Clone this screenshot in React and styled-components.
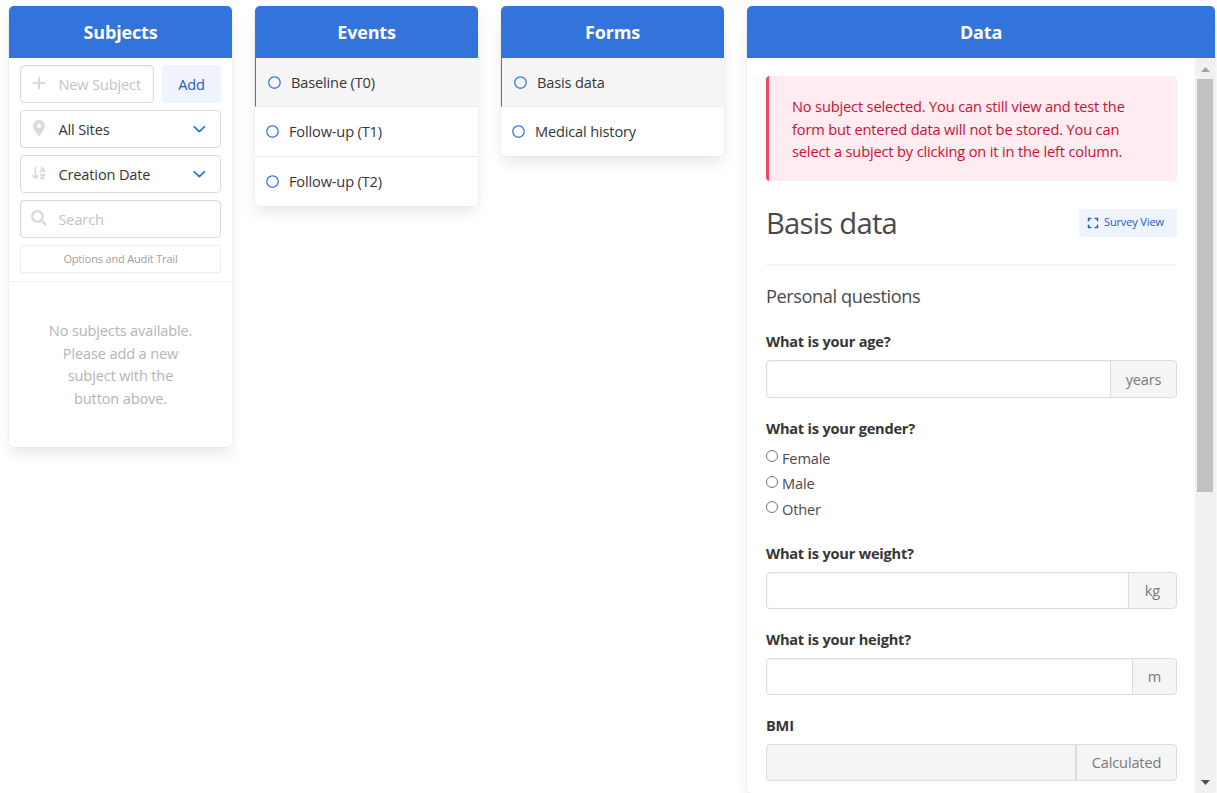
import React from "react";
import styled, { createGlobalStyle, css } from "styled-components";
import { FaPlus, FaExpand, FaLocationDot, FaArrowDownAZ } from "react-icons/fa6";
import { FaSearch, FaRegCircle } from "react-icons/fa";

const GlobalStyle = createGlobalStyle`
  *, *::before, *::after { box-sizing: border-box; }
  html, body { margin: 0; overflow: hidden; background: #fff; }
  body {
    font-family: "Open Sans", "Noto Sans", sans-serif;
    font-size: 14.6px;
    line-height: 22.5px;
    letter-spacing: -0.16px;
    color: #4a4a4a;
  }
  input, button { font: inherit; letter-spacing: inherit; }
`;

const Page = styled.main`
  display: grid;
  grid-template-columns: 223px 223px 223px 468px;
  gap: 23px;
  align-items: start;
  height: 793px;
  padding: 6px 2px 0 9px;
`;

const Panel = styled.section`
  border-radius: 5px;
  background: #fff;
  box-shadow: 0 7.5px 15px -2px rgba(10, 10, 10, 0.1), 0 0 0 1px rgba(10, 10, 10, 0.02);
  ${(p) => p.$tall && css`
    display: flex;
    flex-direction: column;
    height: 787px;
  `}
`;

const PanelHeading = styled.h2`
  display: flex;
  flex: none;
  align-items: center;
  justify-content: center;
  height: 52px;
  margin: 0;
  padding-top: 1px;
  border-radius: 5px 5px 0 0;
  background: #3273dc;
  color: #fff;
  font-size: 18px;
  font-weight: 700;
  letter-spacing: -0.17px;
`;

const Filters = styled.div`
  display: flex;
  flex-direction: column;
  gap: 7px;
  padding: 7px 11px 8px;
  border-bottom: 1px solid #ededed;
`;

const AddRow = styled.div`
  display: flex;
  gap: 8px;
`;

const Control = styled.div`
  display: flex;
  flex: 1;
  align-items: center;
  min-width: 0;
  height: 38px;
  padding-right: ${(p) => (p.$input ? 8 : 14)}px;
  border: 1px solid #dbdbdb;
  border-radius: 4px;
  color: #363636;
  box-shadow: ${(p) => (p.$input ? "inset 0 1px 2px rgba(10, 10, 10, 0.05)" : "none")};
`;

const FilterStack = styled.div`
  display: grid;
  grid-auto-rows: 38px;
  gap: 7px;
`;

const ControlIcon = styled.span`
  display: flex;
  flex: none;
  justify-content: center;
  width: 37.5px;
  padding: 0 1px 2px 0;
  color: #dbdbdb;
  font-size: 16px;
`;

const ControlInput = styled.input`
  flex: 1;
  min-width: 0;
  padding: 0;
  border: 0;
  outline: 0;
  background: none;
  color: #363636;
  &::placeholder { color: #c3c3c3; opacity: 1; }
`;

const ControlText = styled.span`
  flex: 1;
`;

const AddButton = styled.button`
  width: 59px;
  height: 38px;
  padding: 0;
  border: 0;
  border-radius: 4px;
  background: #eef3fc;
  color: #2160c4;
`;

const OptionsButton = styled.button`
  height: 28px;
  padding: 0;
  border: 1px solid #ededed;
  border-radius: 2px;
  background: #fff;
  color: #a0a0a0;
  font-size: 11px;
  letter-spacing: -0.17px;
`;

const EmptyMessage = styled.p`
  margin: 0;
  padding: 37px 37px 38px;
  color: #b5b5b5;
  text-align: center;
`;

const Item = styled.a`
  display: flex;
  align-items: center;
  gap: 10px;
  height: 49px;
  padding: 0 11px;
  border-bottom: 1px solid #ededed;
  color: #363636;
  &:not(:first-child):not(:last-child) { height: 50px; }
  &:last-child { border-bottom: 0; }
  ${(p) => p.$active && css`
    padding-left: 12px;
    border-left: 1px solid #3273dc;
    background: #f5f5f5;
  `}
`;

const ItemIcon = styled(FaRegCircle)`
  width: 13px;
  height: 13px;
  color: #3273dc;
`;

const DataBody = styled.div`
  display: flex;
  flex: 1;
  min-height: 0;
`;

const FormArea = styled.div`
  flex: 1;
  padding: 18px 18px 0 19px;
`;

const Notice = styled.p`
  margin: 0;
  height: 105px;
  padding: 19px 40px 0 23px;
  border-left: 3px solid #f14668;
  border-radius: 4px;
  background: #feecf0;
  color: #cc0f35;
  letter-spacing: -0.15px;
`;

const TitleRow = styled.header`
  display: flex;
  align-items: center;
  justify-content: space-between;
  height: 83px;
  padding-top: 1px;
`;

const Title = styled.h1`
  margin: 0;
  color: #4a4a4a;
  font-size: 29.2px;
  font-weight: 400;
  line-height: 34px;
  letter-spacing: -0.75px;
`;

const SurveyButton = styled.button`
  display: flex;
  align-items: center;
  gap: 5px;
  width: 98px;
  height: 28px;
  padding: 0 0 1px 8px;
  border: 0;
  border-radius: 2px;
  background: #eef3fc;
  color: #2160c4;
  font-size: 11px;
  letter-spacing: -0.14px;
`;

const Divider = styled.hr`
  height: 2px;
  margin: 0 0 19px;
  border: 0;
  background: #f5f5f5;
`;

const SectionTitle = styled.h3`
  margin: 0 0 21.5px;
  color: #4a4a4a;
  font-size: 18.2px;
  font-weight: 400;
  line-height: 23px;
  letter-spacing: -0.42px;
`;

const Field = styled.div`
  margin-bottom: 19px;
`;

const Label = styled.div`
  height: 22.5px;
  margin-bottom: 7px;
  color: #363636;
  font-weight: 700;
  letter-spacing: -0.22px;
`;

const FirstField = styled.div`
  ${Label} { margin-bottom: 8px; }
`;

const InputGroup = styled.div`
  display: flex;
  height: 37.5px;
`;

const NumberInput = styled.input`
  flex: 1;
  min-width: 0;
  border: 1px solid #dbdbdb;
  border-radius: 4px 0 0 4px;
  outline: 0;
  background: #fff;
  box-shadow: inset 0 1px 2px rgba(10, 10, 10, 0.05);
  &:disabled { background: #f5f5f5; box-shadow: none; }
`;

const Unit = styled.span`
  display: flex;
  align-items: center;
  justify-content: center;
  width: ${(p) => p.$width}px;
  margin-left: ${(p) => (p.$joined ? -1 : 0)}px;
  border: 1px solid #dbdbdb;
  border-radius: 0 4px 4px 0;
  background: #f5f5f5;
  color: #7a7a7a;
`;

const RadioList = styled.div`
  margin-top: -1px;
  padding-bottom: 1.5px;
`;

const RadioRow = styled.label`
  display: flex;
  align-items: center;
  gap: 4px;
  height: 25.5px;
`;

const Radio = styled.input`
  width: 12px;
  height: 12px;
  margin: 0 0 3px;
`;

const Scrollbar = styled.div`
  display: flex;
  flex: none;
  flex-direction: column;
  align-items: center;
  width: 20px;
  background: #f1f1f1;
`;

const ScrollThumb = styled.div`
  width: 16px;
  height: 413px;
  background: #c1c1c1;
`;

const ScrollArrow = styled.div`
  display: flex;
  flex: none;
  align-items: center;
  justify-content: center;
  height: 21px;
  padding-top: ${(p) => (p.$end ? 0 : 2)}px;
  margin-top: ${(p) => (p.$end ? "auto" : 0)};
`;

const Chevron = () => (
  <svg width="14" height="9" viewBox="0 0 14 9" fill="none" stroke="#3273dc" strokeWidth="1.8" strokeLinecap="round" strokeLinejoin="round">
    <path d="M2.3 1.8 7.3 6.6 12.3 1.8" />
  </svg>
);

const ItemList = ({ items }) => (
  <nav>
    {items.map((name, i) => (
      <Item key={name} $active={i === 0}>
        <ItemIcon />
        {name}
      </Item>
    ))}
  </nav>
);

const Measure = ({ label, unit, width, disabled }) => (
  <Field>
    <Label>{label}</Label>
    <InputGroup>
      <NumberInput disabled={disabled} />
      <Unit $width={width} $joined={!disabled}>{unit}</Unit>
    </InputGroup>
  </Field>
);

export default function App() {
  return (
    <>
      <GlobalStyle />
      <Page>
        <Panel>
          <PanelHeading>Subjects</PanelHeading>
          <Filters>
            <AddRow>
              <Control $input>
                <ControlIcon><FaPlus /></ControlIcon>
                <ControlInput placeholder="New Subject" />
              </Control>
              <AddButton>Add</AddButton>
            </AddRow>
            <FilterStack>
              <Control>
                <ControlIcon><FaLocationDot /></ControlIcon>
                <ControlText>All Sites</ControlText>
                <Chevron />
              </Control>
              <Control>
                <ControlIcon><FaArrowDownAZ /></ControlIcon>
                <ControlText>Creation Date</ControlText>
                <Chevron />
              </Control>
              <Control $input>
                <ControlIcon><FaSearch /></ControlIcon>
                <ControlInput placeholder="Search" />
              </Control>
            </FilterStack>
            <OptionsButton>Options and Audit Trail</OptionsButton>
          </Filters>
          <EmptyMessage>
            No subjects available.<br />Please add a new<br />subject with the<br />button above.
          </EmptyMessage>
        </Panel>

        <Panel>
          <PanelHeading>Events</PanelHeading>
          <ItemList items={["Baseline (T0)", "Follow-up (T1)", "Follow-up (T2)"]} />
        </Panel>

        <Panel>
          <PanelHeading>Forms</PanelHeading>
          <ItemList items={["Basis data", "Medical history"]} />
        </Panel>

        <Panel $tall>
          <PanelHeading>Data</PanelHeading>
          <DataBody>
            <FormArea>
              <Notice>
                No subject selected. You can still view and test the<br />
                form but entered data will not be stored. You can<br />
                select a subject by clicking on it in the left column.
              </Notice>
              <TitleRow>
                <Title>Basis data</Title>
                <SurveyButton><FaExpand size={12} />Survey View</SurveyButton>
              </TitleRow>
              <Divider />
              <SectionTitle>Personal questions</SectionTitle>
              <FirstField>
                <Measure label="What is your age?" unit="years" width={67} />
              </FirstField>
              <Field>
                <Label>What is your gender?</Label>
                <RadioList>
                  {["Female", "Male", "Other"].map((name) => (
                    <RadioRow key={name}>
                      <Radio type="radio" name="gender" />
                      {name}
                    </RadioRow>
                  ))}
                </RadioList>
              </Field>
              <Measure label="What is your weight?" unit="kg" width={49} />
              <Measure label="What is your height?" unit="m" width={45} />
              <Measure label="BMI" unit="Calculated" width={101} disabled />
            </FormArea>
            <Scrollbar>
              <ScrollArrow>
                <svg width="9" height="5" viewBox="0 0 9 5"><path d="M0 5 4.5 0 9 5Z" fill="#a3a3a3" /></svg>
              </ScrollArrow>
              <ScrollThumb />
              <ScrollArrow $end>
                <svg width="9" height="5" viewBox="0 0 9 5"><path d="M0 0 4.5 5 9 0Z" fill="#505050" /></svg>
              </ScrollArrow>
            </Scrollbar>
          </DataBody>
        </Panel>
      </Page>
    </>
  );
}
